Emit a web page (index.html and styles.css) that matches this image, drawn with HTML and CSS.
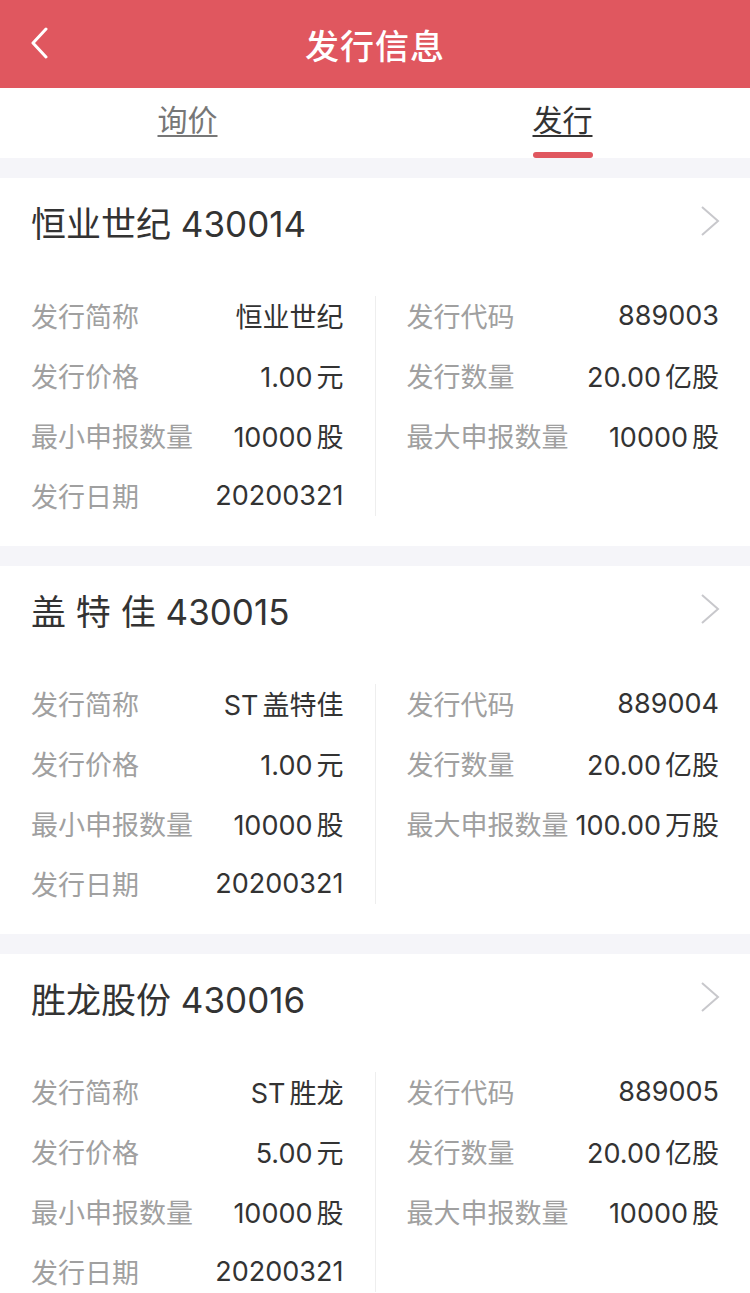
FILE: index.html
```html
<!DOCTYPE html>
<html lang="zh-CN">
<head>
    <meta charset="UTF-8">
    <meta name="viewport" content="width=device-width, initial-scale=1.0">
    <title>发行信息</title>
    <link rel="stylesheet" href="styles.css">
</head>
<body>
    <header class="topbar">
        <a class="back" href="#">
            <svg width="20" height="32" viewBox="0 0 20 32"><path d="M17 2 L4 16 L17 30" fill="none" stroke="#fff" stroke-width="3" stroke-linecap="round" stroke-linejoin="round"/></svg>
        </a>
        <h1>发行信息</h1>
    </header>

    <nav class="tabs">
        <a class="tab" href="#">询价</a>
        <a class="tab active" href="#">发行</a>
    </nav>

    <div class="list">
        <!-- card 1 -->
        <section class="card">
            <div class="card-head">
                <span class="card-title">恒业世纪 430014</span>
                <svg class="arrow" width="22" height="32" viewBox="0 0 22 32"><path d="M3 2 L19 16 L3 30" fill="none" stroke="#c8c8cc" stroke-width="2"/></svg>
            </div>
            <div class="info">
                <div class="col">
                    <div class="row"><span class="label">发行简称</span><span class="value">恒业世纪</span></div>
                    <div class="row"><span class="label">发行价格</span><span class="value">1.00<span class="unit">元</span></span></div>
                    <div class="row"><span class="label">最小申报数量</span><span class="value">10000<span class="unit">股</span></span></div>
                    <div class="row"><span class="label">发行日期</span><span class="value">20200321</span></div>
                </div>
                <div class="col">
                    <div class="row"><span class="label">发行代码</span><span class="value">889003</span></div>
                    <div class="row"><span class="label">发行数量</span><span class="value">20.00<span class="unit">亿股</span></span></div>
                    <div class="row"><span class="label">最大申报数量</span><span class="value">10000<span class="unit">股</span></span></div>
                </div>
            </div>
        </section>

        <!-- card 2 -->
        <section class="card">
            <div class="card-head">
                <span class="card-title">盖 特 佳 430015</span>
                <svg class="arrow" width="22" height="32" viewBox="0 0 22 32"><path d="M3 2 L19 16 L3 30" fill="none" stroke="#c8c8cc" stroke-width="2"/></svg>
            </div>
            <div class="info">
                <div class="col">
                    <div class="row"><span class="label">发行简称</span><span class="value">ST<span class="unit">盖特佳</span></span></div>
                    <div class="row"><span class="label">发行价格</span><span class="value">1.00<span class="unit">元</span></span></div>
                    <div class="row"><span class="label">最小申报数量</span><span class="value">10000<span class="unit">股</span></span></div>
                    <div class="row"><span class="label">发行日期</span><span class="value">20200321</span></div>
                </div>
                <div class="col">
                    <div class="row"><span class="label">发行代码</span><span class="value">889004</span></div>
                    <div class="row"><span class="label">发行数量</span><span class="value">20.00<span class="unit">亿股</span></span></div>
                    <div class="row"><span class="label">最大申报数量</span><span class="value">100.00<span class="unit">万股</span></span></div>
                </div>
            </div>
        </section>

        <!-- card 3 -->
        <section class="card">
            <div class="card-head">
                <span class="card-title">胜龙股份 430016</span>
                <svg class="arrow" width="22" height="32" viewBox="0 0 22 32"><path d="M3 2 L19 16 L3 30" fill="none" stroke="#c8c8cc" stroke-width="2"/></svg>
            </div>
            <div class="info">
                <div class="col">
                    <div class="row"><span class="label">发行简称</span><span class="value">ST<span class="unit">胜龙</span></span></div>
                    <div class="row"><span class="label">发行价格</span><span class="value">5.00<span class="unit">元</span></span></div>
                    <div class="row"><span class="label">最小申报数量</span><span class="value">10000<span class="unit">股</span></span></div>
                    <div class="row"><span class="label">发行日期</span><span class="value">20200321</span></div>
                </div>
                <div class="col">
                    <div class="row"><span class="label">发行代码</span><span class="value">889005</span></div>
                    <div class="row"><span class="label">发行数量</span><span class="value">20.00<span class="unit">亿股</span></span></div>
                    <div class="row"><span class="label">最大申报数量</span><span class="value">10000<span class="unit">股</span></span></div>
                </div>
            </div>
        </section>
    </div>
</body>
</html>
```

FILE: styles.css
```css
/* General */
body {
    margin: 0;
    background-color: #f5f5f9;
    font-family: Inter, "Noto Sans CJK SC", sans-serif;
    color: #333;
}

/* Header */
.topbar {
    height: 88px;
    background-color: #e0575f;
    display: flex;
    align-items: center;
    justify-content: center;
    position: relative;
}

.topbar h1 {
    margin: 0;
    font-size: 34px;
    font-weight: 500;
    color: #fff;
    letter-spacing: 1px;
}

.back {
    position: absolute;
    left: 29px;
    top: 27px;
    display: flex;
}

/* Tabs */
.tabs {
    height: 70px;
    background-color: #fff;
    display: flex;
}

.tab {
    flex: 1;
    display: flex;
    justify-content: center;
    padding-top: 12px;
    font-size: 30px;
    line-height: 40px;
    color: #777;
    text-decoration: underline;
    text-underline-offset: 4px;
    text-decoration-thickness: 2px;
    position: relative;
}

.tab.active {
    color: #333;
}

.tab.active::after {
    content: "";
    position: absolute;
    bottom: 0;
    left: 50%;
    width: 60px;
    height: 6px;
    margin-left: -30px;
    border-radius: 3px;
    background-color: #e0575f;
}

/* Cards */
.list {
    padding-top: 20px;
}

.card {
    background-color: #fff;
    margin-bottom: 20px;
    padding-bottom: 20px;
}

.card-head {
    height: 86px;
    margin-bottom: 20px;
    padding: 0 29px 2px 31px;
    display: flex;
    align-items: center;
    justify-content: space-between;
}

.card-title {
    font-size: 35px;
    color: #333;
}

.info {
    display: flex;
    position: relative;
}

.info::after {
    content: "";
    position: absolute;
    left: 375px;
    top: 10px;
    bottom: 10px;
    width: 1px;
    background-color: #eee;
}

.col {
    flex: 1;
    padding: 0 31px;
}

.col + .col {
    padding-left: 32px;
}

.row {
    height: 60px;
    padding-bottom: 2px;
    box-sizing: border-box;
    display: flex;
    align-items: center;
    justify-content: space-between;
    font-size: 27px;
}

.label {
    color: #a0a0a0;
}

.value {
    color: #333;
}

.unit {
    margin-left: 4px;
}
```
